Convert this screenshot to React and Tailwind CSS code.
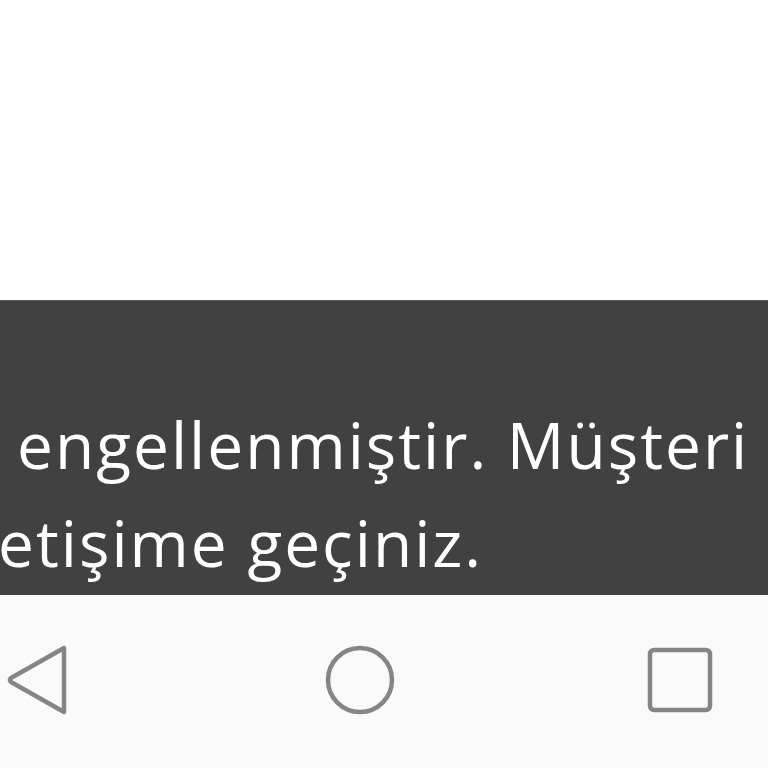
import React from 'react';

function NavBar() {
  return (
    <div className="h-[173px] bg-[#fafafa]">
      <div className="flex items-center justify-between h-full pl-[6px] pr-[55px]">
        <svg width="64" height="72" viewBox="0 0 64 72" fill="none" className="-mt-[4px]">
          <path d="M58 4 L58 68 L5 38 Q3 36 5 34 Z" stroke="#858585" strokeWidth="4.5" strokeLinejoin="round" />
        </svg>
        <svg width="72" height="72" viewBox="0 0 72 72" fill="none" className="-mt-[4px] -mr-[2px]">
          <circle cx="36" cy="36" r="32" stroke="#858585" strokeWidth="4.5" />
        </svg>
        <svg width="66" height="66" viewBox="0 0 66 66" fill="none" className="-mt-[4px]">
          <rect x="3" y="3" width="60" height="60" rx="4" stroke="#858585" strokeWidth="4.5" />
        </svg>
      </div>
    </div>
  );
}

export default function App() {
  return (
    <div className="w-[768px] h-[768px] flex flex-col overflow-hidden bg-white" style={{ fontFamily: '"Open Sans", "Noto Sans", sans-serif' }}>
      <div className="h-[300px] bg-white" />
      <div className="h-[295px] bg-[#414141] border-t border-[#5a5a5a] text-white text-[64px] leading-[98px] tracking-[2px] pt-[95px] whitespace-nowrap overflow-hidden [font-variant-ligatures:none]">
        <div className="pl-[17px]">engellenmiştir. Müşteri</div>
        <div className="-ml-[2px]">etişime geçiniz.</div>
      </div>
      <NavBar />
    </div>
  );
}
